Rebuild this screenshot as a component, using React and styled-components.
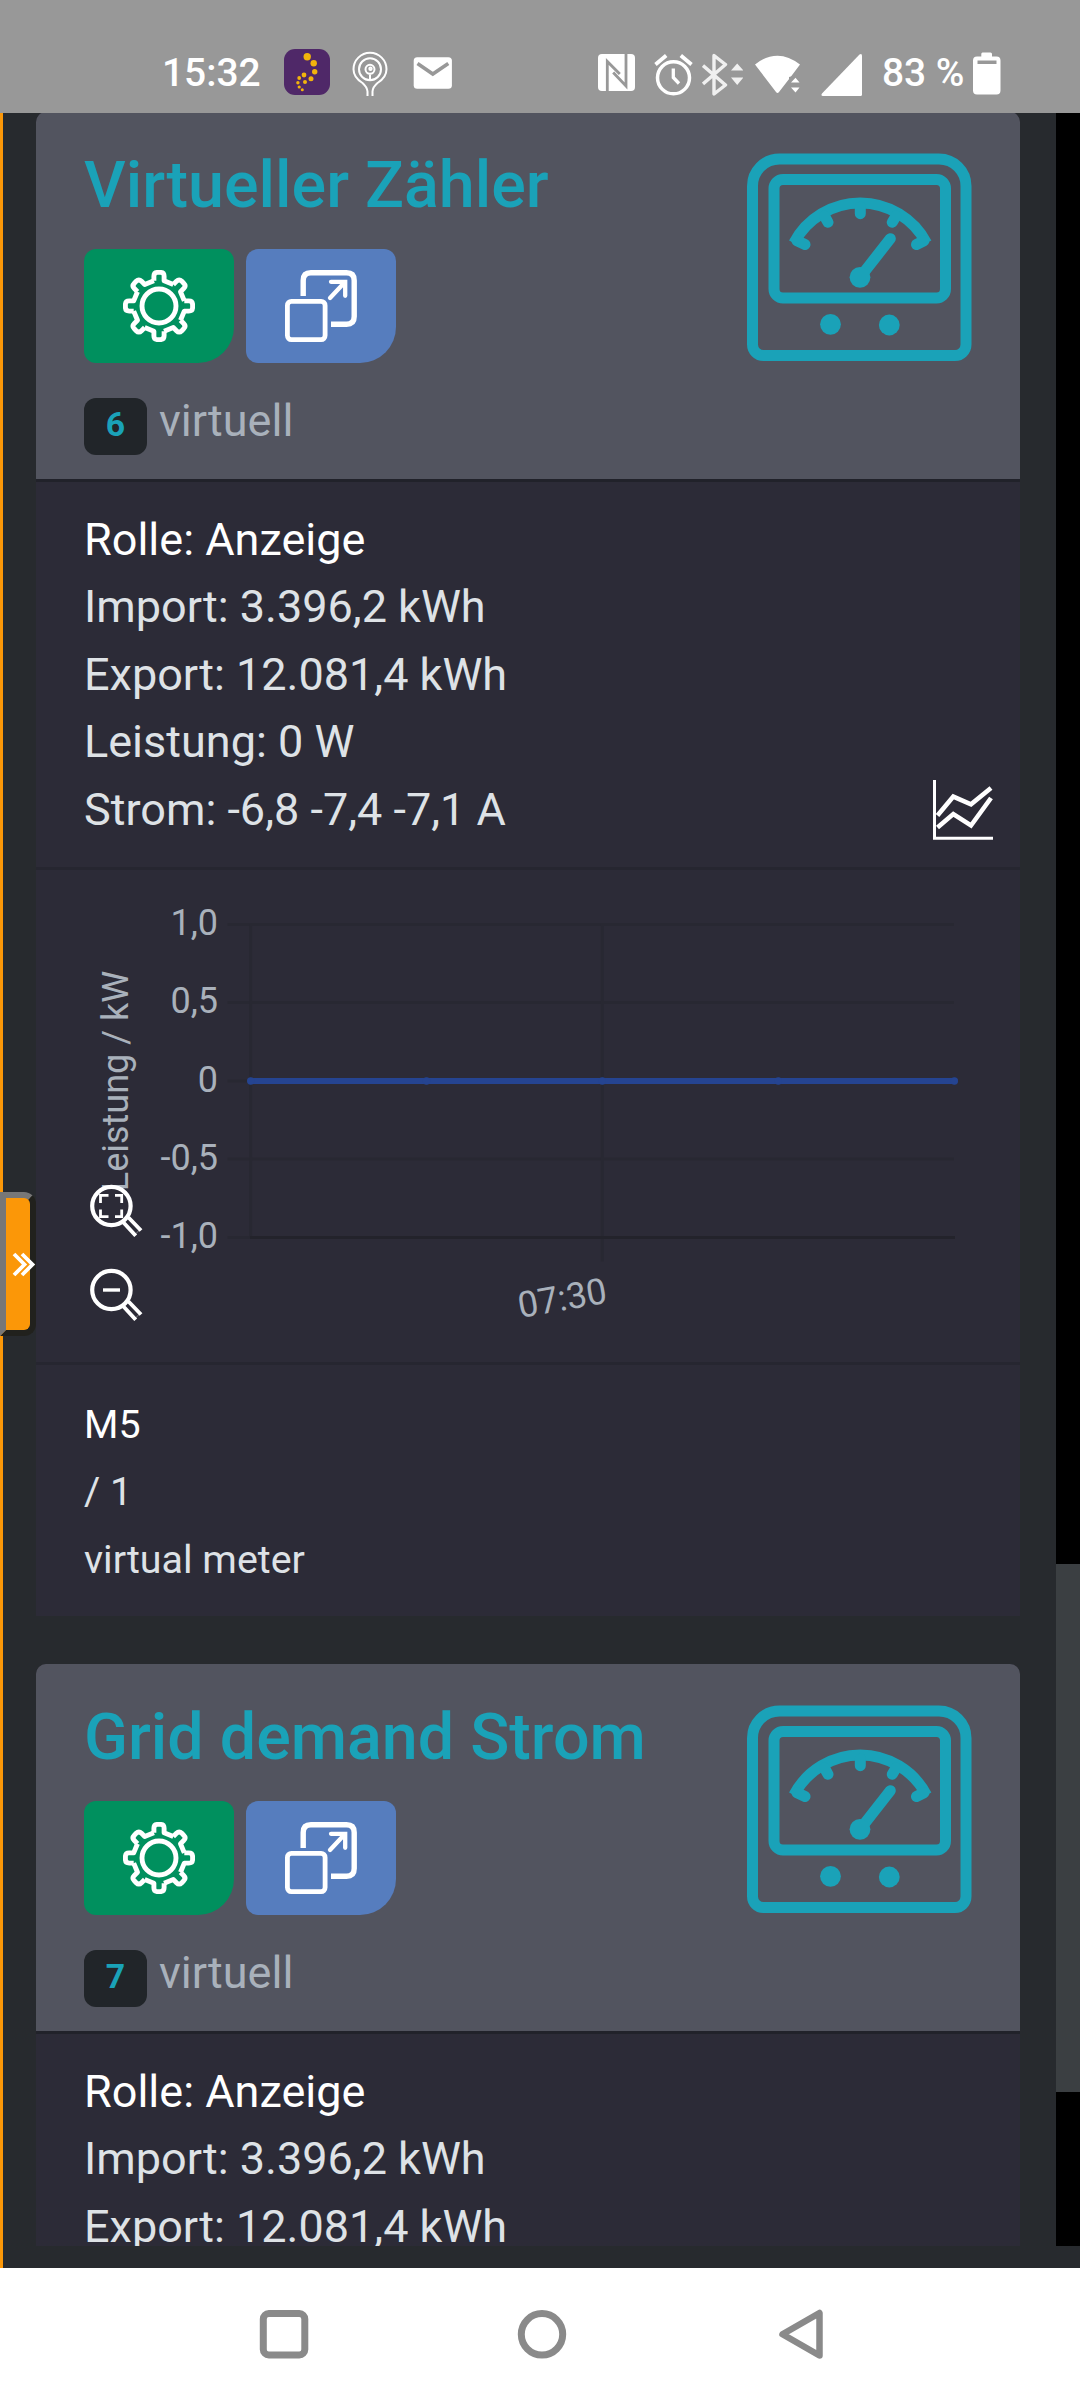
import React from 'react'
import styled, {createGlobalStyle} from 'styled-components'

const Color = {
  page: '#272a2e',
  header: '#52545f',
  body: '#2c2b37',
  line: '#262630',
  grid: '#282832',
  info: '#1aa2b8',
  text: '#dee2e6',
  muted: '#a9b1bb',
  orange: '#fb9708',
  graph: '#254491'
}

const GlobalStyle = createGlobalStyle`
  * { box-sizing: border-box; }
  body {
    margin: 0;
    background: ${Color.page};
    font-family: Roboto, 'Liberation Sans', sans-serif;
  }
  svg { display: block; flex: none; }
`

const Screen = styled.div`
  width: 1080px;
  height: 2400px;
  display: flex;
  flex-direction: column;
  overflow: hidden;
`

const StatusBar = styled.header`
  flex: none;
  height: 113px;
  padding: 48px 79px 0 162px;
  display: flex;
  align-items: flex-start;
  background: #989898;
  color: white;
`

const StatusText = styled.span`
  width: ${props => props.$width};
  margin-right: ${props => props.$gap || 0};
  font-size: 38.9px;
  font-weight: 500;
  line-height: 50px;
  white-space: nowrap;
`

const StatusIcon = styled.svg`
  margin-right: ${props => props.$gap || 0};
`

const Spacer = styled.div`
  flex: 1;
`

const Main = styled.main`
  position: relative;
  flex: none;
  height: 2155px;
  padding-bottom: 22px;
  display: flex;
  border-left: 3px solid ${Color.orange};
  background: ${Color.page};
`

const CardList = styled.div`
  flex: 1;
  height: 100%;
  padding: 0 36px 0 33px;
  display: flex;
  flex-direction: column;
  gap: 48px;
  overflow: hidden;
`

const ScrollTrack = styled.div`
  width: 24px;
  height: 100%;
  padding-top: 1451px;
  background: black;
`

const ScrollThumb = styled.div`
  height: 528px;
  background: #3b3f42;
`

const CardBox = styled.article`
  flex: none;
  background: ${Color.body};
  border-radius: 10px 10px 0 0;
  &:first-child { margin-top: -1px; }
`

const CardHeader = styled.div`
  height: 370px;
  padding: 34px 48px 0;
  display: flex;
  justify-content: space-between;
  background: ${Color.header};
  border-bottom: 3px solid #21222a;
  border-radius: 10px 10px 0 0;
`

const Title = styled.h2`
  margin: 0 0 24px;
  color: ${Color.info};
  font-size: 64.6px;
  font-weight: 500;
  line-height: 79px;
  white-space: nowrap;
`

const Buttons = styled.div`
  display: flex;
  gap: 12px;
`

const ActionButton = styled.button`
  width: 150px;
  height: 114px;
  padding: 0;
  display: flex;
  align-items: center;
  justify-content: center;
  border: 0;
  border-radius: 12px 12px 36px 12px;
  background: ${props => props.$color};
`

const TypeRow = styled.div`
  margin-top: 24px;
  display: flex;
  color: ${Color.muted};
  font-size: 45px;
  line-height: 67.5px;
`

const Badge = styled.span`
  width: 63px;
  height: 57px;
  margin: 11px 12px 0 0;
  border-radius: 12px;
  background: #212529;
  color: ${Color.info};
  font-size: 33.75px;
  font-weight: 700;
  line-height: 54px;
  text-align: center;
`

const MeterIcon = styled.svg`
  margin-top: 7px;
`

const Section = styled.section`
  position: relative;
  padding: 23.8px 48px 23.7px;
  border-bottom: 3px solid ${Color.line};
`

const ChartSection = styled(Section)`
  height: 495px;
  padding: 0;
`

const InfoSection = styled(Section)`
  padding: 24px 48px 24.5px;
  border-bottom: 0;
`

const Line = styled.div`
  height: 67.5px;
  color: ${props => props.$bright ? 'white' : Color.text};
  font-size: 45px;
  line-height: 67.5px;
  white-space: nowrap;
`

const Small = styled.span`
  font-size: 39.4px;
`

const GraphToggle = styled.svg`
  position: absolute;
  right: 27px;
  top: 298px;
`

const ZoomTools = styled.div`
  position: absolute;
  left: 52px;
  top: 314px;
  display: flex;
  flex-direction: column;
  gap: 28px;
`

const SideTab = styled.button`
  position: absolute;
  left: -3px;
  top: 1079px;
  width: 36px;
  height: 144px;
  padding: 0;
  display: flex;
  align-items: center;
  border: 6px solid;
  border-color: #777 #21211d #21211d #777;
  border-radius: 0 12px 12px 0;
  background: ${Color.orange};
  svg { overflow: visible; margin-left: 7px; }
`

const NavBar = styled.nav`
  flex: 1;
  padding: 0 257px;
  display: flex;
  align-items: center;
  justify-content: space-between;
  background: white;
`

const ChartText = styled.text`
  fill: ${Color.muted};
  font-family: Roboto, 'Liberation Sans', sans-serif;
  font-size: 36px;
`

const GEAR_ANGLES = [0, 45, 90, 135, 180, 225, 270, 315]

const Gear = () => (
  <svg width='72' height='72' viewBox='-36 -36 72 72' fill='none' stroke='white' strokeWidth='4.9' strokeLinejoin='round'>
    {GEAR_ANGLES.map(a => (
      <path key={a} transform={`rotate(${a})`} d='M-5.1 -25.3V-29.8q0-3.8 3.8-3.8h2.6q3.8 0 3.8 3.8V-25.3L14.3 -21.5' />
    ))}
    <circle r='17' />
  </svg>
)

const Popup = () => (
  <svg width='72' height='72' fill='none' stroke='white'>
    <path strokeWidth='5.4' d='M18.2 26V10.5q0-7.7 7.7-7.7h35.6q7.7 0 7.7 7.7v36q0 7.8-7.7 7.8H46' />
    <rect strokeWidth='4.8' x='2.4' y='31.4' width='37.7' height='38.2' rx='4' />
    <path strokeWidth='4.3' strokeLinecap='round' d='M45 28 60 12M46 11.8h14.2v14' />
  </svg>
)

const Meter = () => (
  <MeterIcon width='225' height='209' fill='none' stroke={Color.info} strokeWidth='11'>
    <path d='M5.5 33A27 27 0 0 1 32.5 6H192A27 27 0 0 1 219 33V191.5A11 11 0 0 1 208 202.5H16.5A11 11 0 0 1 5.5 191.5Z' />
    <rect x='27' y='26.5' width='171.5' height='118.5' rx='9' />
    <path d='M46.9 90A75 75 0 0 1 179.5 90' />
    <path strokeLinecap='round' d='M50 87.8 58 91.5M77.5 63 81 69.3M113.3 54V60.7M149 63 145.3 69.3M177 87.8 169.5 91.5' />
    <path strokeLinecap='round' d='M113 124.3 143.3 85.7' />
    <g fill={Color.info} stroke='none'>
      <circle cx='113' cy='124.3' r='10.4' />
      <circle cx='83.5' cy='171.3' r='10.4' />
      <circle cx='142.3' cy='172' r='10.4' />
    </g>
  </MeterIcon>
)

const Magnifier = ({children}) => (
  <svg width='56' height='56' fill='none' stroke='white' strokeWidth='4.2'>
    <circle cx='23.4' cy='22' r='19.2' />
    <path strokeWidth='3.9' d='M40.5 33.5 53 46.5M35.5 38.5 47.7 51.8' />
    <path strokeWidth='1' d='M45.7 51.9 52.7 44.8' opacity='.4' />
    {children}
  </svg>
)

const GRID = [
  {label: '1,0', y: 54.5},
  {label: '0,5', y: 132.5},
  {label: '0', y: 211},
  {label: '-0,5', y: 289},
  {label: '-1,0', y: 367.5}
]

const POINTS = [214.7, 390.5, 566.3, 742.3, 918.4]

const PowerChart = () => (
  <svg width='984' height='492'>
    <g stroke={Color.grid} strokeWidth='3'>
      {GRID.map(g => <path key={g.label} d={`M191.5 ${g.y}H918`} />)}
      <path d='M214.7 54V368M566.3 54V391.5' />
      <path stroke='#23232b' d='M214 367.5H919' />
    </g>
    {GRID.map(g => (
      <ChartText key={g.label} x='182' y={g.y + 10.5} textAnchor='end'>{g.label}</ChartText>
    ))}
    <path stroke={Color.graph} strokeWidth='6' d='M214.7 211H918.4' />
    {POINTS.map(x => <circle key={x} cx={x} cy='211' r='3.7' fill={Color.graph} />)}
    <ChartText transform='translate(92 211) rotate(-90)' textAnchor='middle'>Leistung / kW</ChartText>
    <ChartText transform='translate(572.5 432.5) rotate(-10)' textAnchor='end'>07:30</ChartText>
  </svg>
)

const Card = ({title, id, brief}) => (
  <CardBox>
    <CardHeader>
      <div>
        <Title>{title}</Title>
        <Buttons>
          <ActionButton $color='#00905e'><Gear /></ActionButton>
          <ActionButton $color='#567dbe'><Popup /></ActionButton>
        </Buttons>
        <TypeRow>
          <Badge>{id}</Badge>
          virtuell
        </TypeRow>
      </div>
      <Meter />
    </CardHeader>
    <Section>
      <Line $bright>Rolle: Anzeige</Line>
      <Line>Import: 3.396,2 kWh</Line>
      <Line>Export: 12.081,4 kWh</Line>
      {!brief && <Line>Leistung: 0 W</Line>}
      {!brief && <Line>Strom: -6,8 -7,4 -7,1 A</Line>}
      {!brief && (
        <GraphToggle width='60' height='60' fill='none' stroke='white'>
          <path strokeWidth='3' d='M1.5 0V58.3H60' />
          <path strokeWidth='4.6' d='M4.5 35.5 20.3 16.6 38 24.3 58 8M4.5 47.5 20.3 34 38 45.5 58 18' />
        </GraphToggle>
      )}
    </Section>
    {!brief && (
      <ChartSection>
        <PowerChart />
        <ZoomTools>
          <Magnifier>
            <path strokeWidth='2.8' d='M12.5 19V11.4H20.5M27 11.4H33.7V19M33.7 25.5V32.6H27M20.5 32.6H12.5V25.5' />
          </Magnifier>
          <Magnifier>
            <path strokeWidth='3.4' d='M15 22H32' />
          </Magnifier>
        </ZoomTools>
      </ChartSection>
    )}
    {!brief && (
      <InfoSection>
        <Line $bright><Small>M5</Small></Line>
        <Line><Small>/ 1</Small></Line>
        <Line><Small>virtual meter</Small></Line>
      </InfoSection>
    )}
  </CardBox>
)

const Status = () => (
  <StatusBar>
    <StatusText $width='97px' $gap='25px'>15:32</StatusText>
    <StatusIcon $gap='20px' width='46' height='47'>
      <rect y='1' width='46' height='46' rx='11' fill='#4f2868' />
      <g fill='#f2b40c'>
        <circle cx='23.2' cy='8.7' r='3.7' />
        <circle cx='29.7' cy='15.3' r='3.2' />
        <circle cx='30.7' cy='23.7' r='2.7' />
        <circle cx='27' cy='30.7' r='2.5' />
        <circle cx='20' cy='27' r='2.4' />
        <circle cx='21' cy='34' r='2' />
        <circle cx='15.2' cy='30' r='1.9' />
        <circle cx='13.9' cy='34.7' r='1.7' />
        <circle cx='15.2' cy='39' r='1.6' />
        <circle cx='18.3' cy='41.7' r='1.5' />
      </g>
    </StatusIcon>
    <StatusIcon $gap='23px' width='40' height='48' fill='none' stroke='white' strokeWidth='2'>
      <path d='M17.5 48V43.5Q17 39 12.5 35Q3.5 29.5 3.5 21.3A16.5 16.5 0 0 1 36.5 21.3Q36.5 29.5 27.5 35Q22.8 39 22.5 43.5V48' />
      <circle cx='20' cy='21.3' r='11' />
      <circle cx='20' cy='21.3' r='4.5' />
      <path d='M20 26.5V32' />
      <circle cx='20.5' cy='20.8' r='1.2' />
    </StatusIcon>
    <StatusIcon width='40' height='42'>
      <rect x='.7' y='9.3' width='38.2' height='31.5' rx='3.5' fill='white' />
      <path d='M4.5 15.5 19.8 26 35.3 15.5' fill='none' stroke='#989898' strokeWidth='3.6' />
    </StatusIcon>
    <Spacer />
    <StatusIcon $gap='19px' width='37' height='45'>
      <rect y='6' width='37' height='37' rx='4' fill='white' />
      <path d='M9.3 43V13.5L21.8 26M28 6V38L15.2 24.5' fill='none' stroke='#989898' strokeWidth='2.8' />
    </StatusIcon>
    <StatusIcon $gap='9px' width='39' height='48' fill='none' stroke='white'>
      <circle cx='19.5' cy='29.8' r='16' strokeWidth='3.5' />
      <path strokeWidth='3.3' d='M19.3 20.5V29.5L25 35.5' />
      <path strokeWidth='3.8' d='M1.5 16.5 12.2 7.5M26.8 7.5 37.5 16.5' />
    </StatusIcon>
    <StatusIcon $gap='12px' width='41' height='48' fill='none' stroke='#f0f0f0' strokeWidth='3.4'>
      <path strokeLinejoin='round' d='M1 17.5 23.5 37 12 46V7.5L23.5 16.5 1 36' />
      <path stroke='none' fill='#f0f0f0' d='M29 22.5 35.2 15.5 41.5 22.5ZM29 29.5H41.5L35.2 37Z' />
    </StatusIcon>
    <StatusIcon $gap='21px' width='45' height='48' fill='white'>
      <path d='M0 16.5Q22.5-1.2 45 16.5L36 28.5 24 44Q22.5 46 21 44Z' />
      <path d='M34 38.5V29L40 27.5H45V48H34Z' fill='#989898' />
      <path d='M36 34.5 40.5 29.8 44.5 34.5ZM36 39.5H44.5L40.5 44.5Z' />
    </StatusIcon>
    <StatusIcon $gap='20px' width='41' height='48' fill='white'>
      <path d='M38.5 6.5Q41 5 41 8V46.5Q41 48 39.5 48H2Q-.5 48 1 45.5Z' />
    </StatusIcon>
    <StatusText $width='82px' $gap='9px'>83 %</StatusText>
    <StatusIcon width='28' height='48' fill='white'>
      <path d='M9.5 4.5H17.5Q19 4.5 19 6V8.5H23.5Q27.5 8.5 27.5 12.5V42.5Q27.5 46.5 23.5 46.5H4Q0 46.5 0 42.5V12.5Q0 8.5 4 8.5H8.3V6Q8.3 4.5 9.5 4.5Z' />
      <path d='M4.5 12.5H23.5V16H4.5Z' fill='#989898' />
    </StatusIcon>
  </StatusBar>
)

export default function App () {
  return (
    <Screen>
      <GlobalStyle />
      <Status />
      <Main>
        <CardList>
          <Card title='Virtueller Zähler' id='6' />
          <Card title='Grid demand Strom' id='7' brief />
        </CardList>
        <ScrollTrack>
          <ScrollThumb />
        </ScrollTrack>
        <SideTab>
          <svg width='22' height='23' fill='none' stroke='white' strokeWidth='3.8'>
            <path d='M1 1 11.5 11.5 1 22M9 1 19.5 11.5 9 22' />
          </svg>
        </SideTab>
      </Main>
      <NavBar>
        <svg width='54' height='54' fill='none' stroke='#8a8a8a' strokeWidth='7'>
          <rect x='6.3' y='6.5' width='41.5' height='41.5' rx='5.5' />
        </svg>
        <svg width='54' height='54' fill='none' stroke='#8a8a8a' strokeWidth='7'>
          <circle cx='29' cy='27.3' r='20.7' />
        </svg>
        <svg width='54' height='54' fill='none' stroke='#8a8a8a' strokeWidth='6.5' strokeLinejoin='round'>
          <path d='M13.5 27.3 50.5 6V48.5Z' />
        </svg>
      </NavBar>
    </Screen>
  )
}
